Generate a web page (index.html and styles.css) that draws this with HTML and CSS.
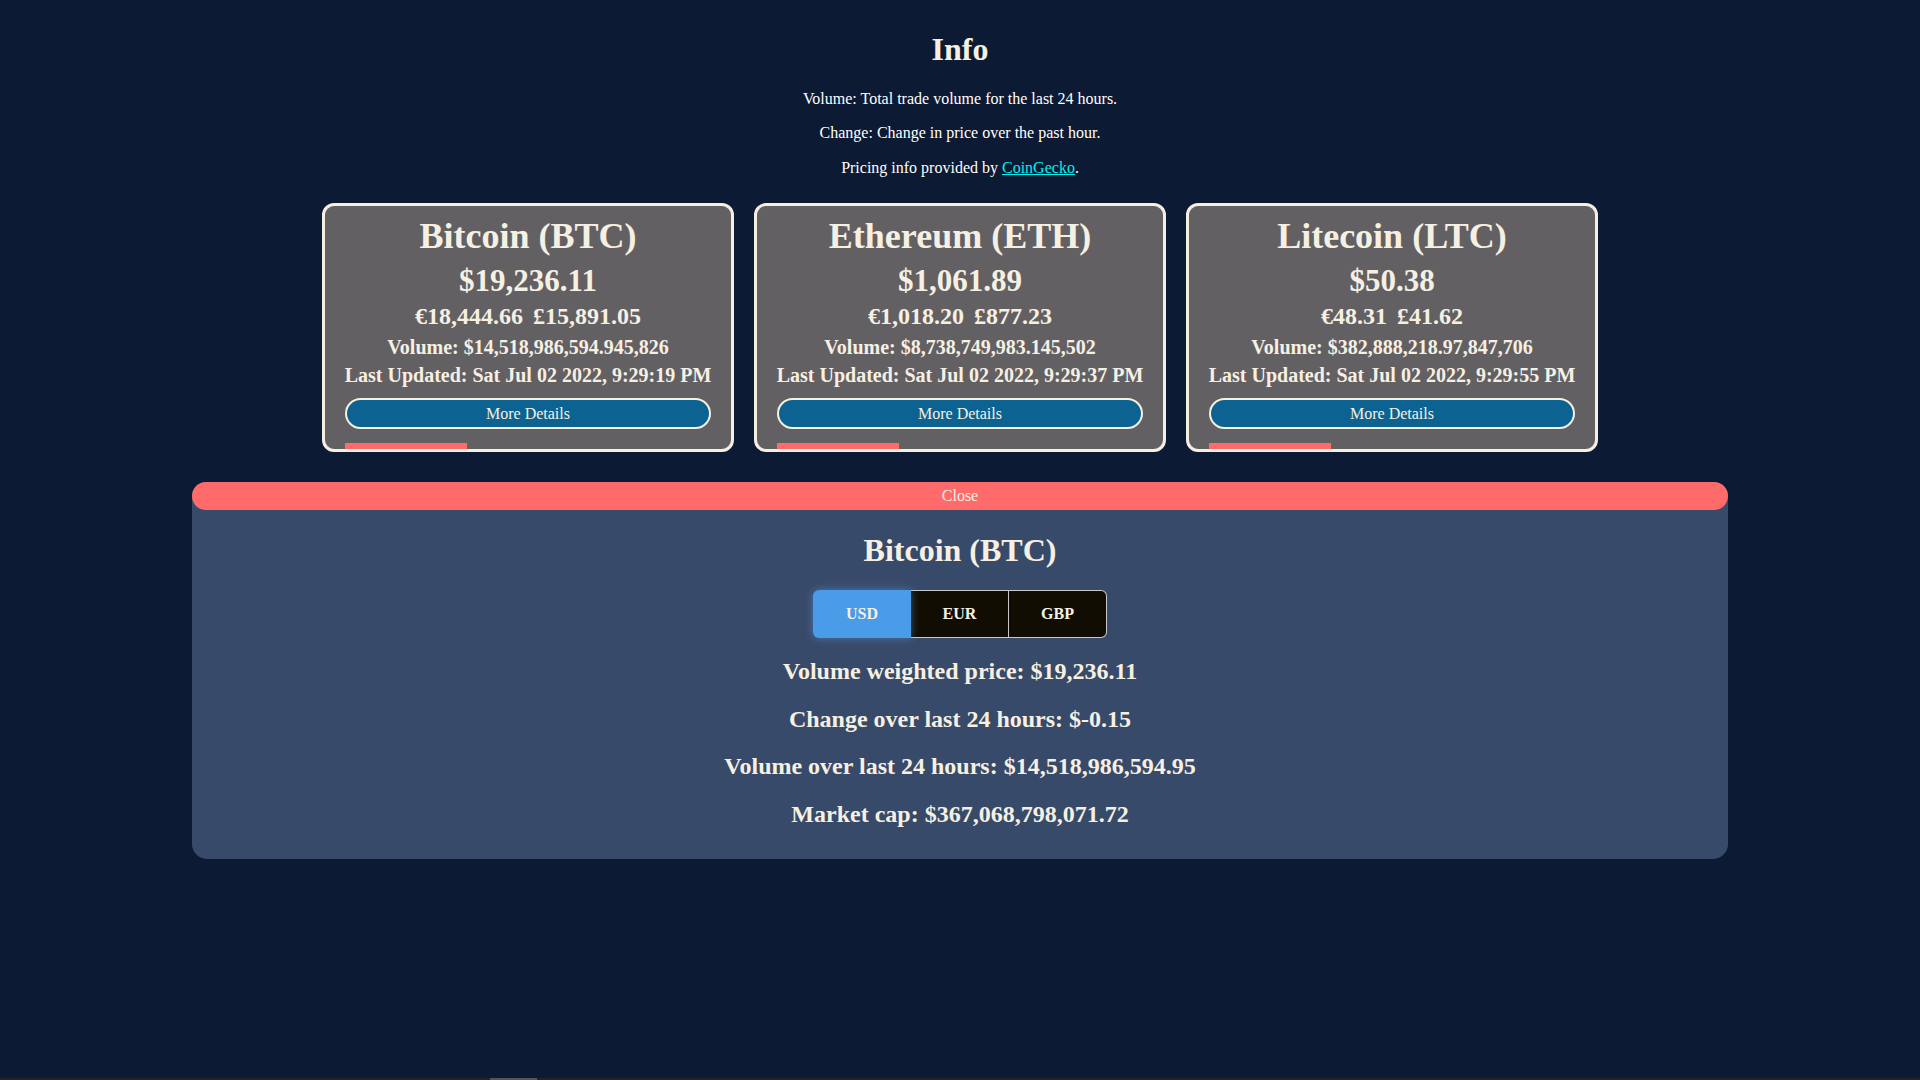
FILE: index.html
```html
<!DOCTYPE html>
<html lang="en">
<head>
<meta charset="utf-8">
<title>Crypto Prices</title>
<link rel="stylesheet" href="styles.css">
</head>
<body>
<header class="info">
  <h1 class="info-title">Info</h1>
  <p class="info-line">Volume: Total trade volume for the last 24 hours.</p>
  <p class="info-line">Change: Change in price over the past hour.</p>
  <p class="info-line">Pricing info provided by <a class="info-link" href="#">CoinGecko</a>.</p>
</header>

<section class="cards">
  <article class="card">
    <div class="card-name">Bitcoin (BTC)</div>
    <div class="card-price">$19,236.11</div>
    <div class="card-alt"><span>€18,444.66</span><span>£15,891.05</span></div>
    <div class="card-line">Volume: $14,518,986,594.945,826</div>
    <div class="card-line card-updated">Last Updated: Sat Jul 02 2022, 9:29:19 PM</div>
    <button class="card-btn">More Details</button>
    <div class="card-bar"></div>
  </article>
  <article class="card">
    <div class="card-name">Ethereum (ETH)</div>
    <div class="card-price">$1,061.89</div>
    <div class="card-alt"><span>€1,018.20</span><span>£877.23</span></div>
    <div class="card-line">Volume: $8,738,749,983.145,502</div>
    <div class="card-line card-updated">Last Updated: Sat Jul 02 2022, 9:29:37 PM</div>
    <button class="card-btn">More Details</button>
    <div class="card-bar"></div>
  </article>
  <article class="card">
    <div class="card-name">Litecoin (LTC)</div>
    <div class="card-price">$50.38</div>
    <div class="card-alt"><span>€48.31</span><span>£41.62</span></div>
    <div class="card-line">Volume: $382,888,218.97,847,706</div>
    <div class="card-line card-updated">Last Updated: Sat Jul 02 2022, 9:29:55 PM</div>
    <button class="card-btn">More Details</button>
    <div class="card-bar"></div>
  </article>
</section>

<section class="details">
  <button class="details-close">Close</button>
  <h1 class="details-title">Bitcoin (BTC)</h1>
  <div class="toggle">
    <button class="toggle-btn active">USD</button>
    <button class="toggle-btn">EUR</button>
    <button class="toggle-btn">GBP</button>
  </div>
  <h2 class="stat">Volume weighted price: $19,236.11</h2>
  <h2 class="stat">Change over last 24 hours: $-0.15</h2>
  <h2 class="stat">Volume over last 24 hours: $14,518,986,594.95</h2>
  <h2 class="stat">Market cap: $367,068,798,071.72</h2>
</section>

<div class="hscroll"><div class="hscroll-thumb"></div></div>
</body>
</html>
```

FILE: styles.css
```css
html, body {
  margin: 0;
  padding: 0;
}
body {
  background: #0c1a33;
  color: #f6f0e2;
  font-family: "Liberation Serif", "Times New Roman", serif;
  min-height: 1080px;
}

.info {
  text-align: center;
  padding-top: 31px;
}
.info-title {
  font-size: 32px;
  line-height: 37px;
  margin: 0 0 22px;
  font-weight: bold;
}
.info-line {
  font-size: 16px;
  line-height: 18.4px;
  margin: 0 0 16px;
  color: #ffffff;
}
.info-link {
  color: #00f0f0;
}

.cards {
  display: flex;
  justify-content: center;
}
.card {
  box-sizing: border-box;
  width: 412px;
  margin: 10px 10px;
  padding: 10px 20px 0;
  background: #636064;
  border: 3px solid #f6f0e2;
  border-radius: 12px;
  text-align: center;
  font-weight: bold;
  display: flex;
  flex-direction: column;
}
.card-name {
  font-size: 36px;
  line-height: 41px;
  white-space: nowrap;
}
.card-price {
  font-size: 31px;
  line-height: 36px;
  margin-top: 6px;
}
.card-alt {
  font-size: 24px;
  line-height: 28px;
  margin-top: 3px;
  display: flex;
  justify-content: center;
  gap: 10px;
}
.card-line {
  font-size: 20px;
  line-height: 23px;
  margin-top: 6px;
  white-space: nowrap;
}
.card-updated {
  margin-top: 5px;
  margin-left: -4px;
  margin-right: -4px;
}
.card-btn {
  margin-top: 11px;
  height: 31px;
  width: 100%;
  box-sizing: border-box;
  background: #0c6391;
  border: 2px solid #f6f0e2;
  border-radius: 16px;
  color: #f6f0e2;
  font-family: "Liberation Serif", "Times New Roman", serif;
  font-size: 16px;
  padding: 0;
}
.card-bar {
  margin-top: 14px;
  width: 33.333%;
  height: 6px;
  background: #ff6b6b;
}

.details {
  box-sizing: border-box;
  width: 1536px;
  margin: 20px auto 0;
  background: #384a69;
  border-radius: 15px;
  text-align: center;
  padding-bottom: 10px;
}
.details-close {
  display: block;
  width: 100%;
  height: 28px;
  border: none;
  border-radius: 14px;
  background: #ff6b6b;
  color: #f6f0e2;
  font-family: "Liberation Serif", "Times New Roman", serif;
  font-size: 16px;
  padding: 0;
}
.details-title {
  font-size: 32px;
  line-height: 37px;
  margin: 22px 0 21px;
}
.toggle {
  display: inline-flex;
}
.toggle-btn {
  box-sizing: border-box;
  width: 98px;
  height: 48px;
  background: #110d02;
  color: #f6f0e2;
  border: 1px solid #c9c9c9;
  border-left: none;
  font-family: "Liberation Serif", "Times New Roman", serif;
  font-weight: bold;
  font-size: 16px;
  padding: 0;
}
.toggle-btn:first-child {
  border-radius: 6px 0 0 6px;
}
.toggle-btn:last-child {
  border-radius: 0 6px 6px 0;
}
.toggle-btn.active {
  background: #4a9be8;
  border: none;
  box-shadow: 0 0 8px rgba(90, 160, 235, 0.55);
  position: relative;
}
.stat {
  font-size: 24px;
  line-height: 27.6px;
  margin: 20px 0;
  font-weight: bold;
}

.hscroll {
  position: fixed;
  left: 0;
  right: 0;
  bottom: 0;
  height: 2px;
  background: #232323;
}
.hscroll-thumb {
  position: absolute;
  left: 490px;
  width: 47px;
  top: 0;
  height: 2px;
  background: #555555;
}
```
